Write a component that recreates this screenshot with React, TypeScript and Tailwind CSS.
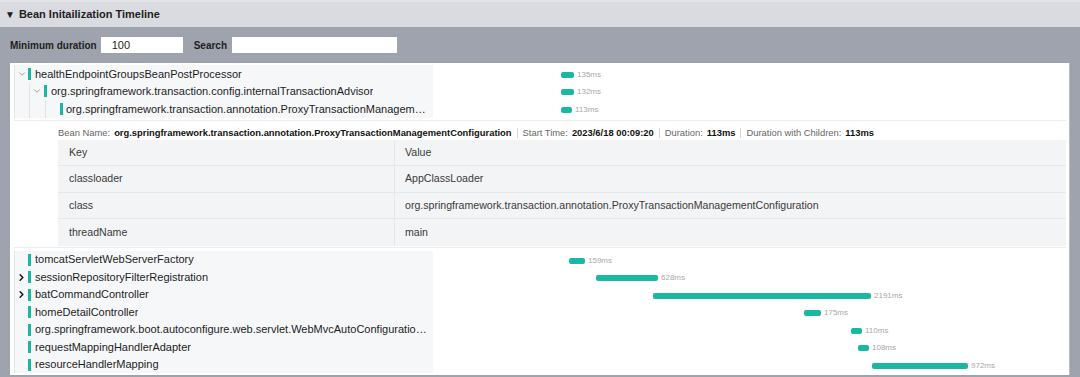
import { ChevronDown, ChevronRight } from "lucide-react";

type Row = {
  name: string;
  level: number;
  toggle?: "open" | "closed";
  start: number;
  width: number;
  ms: string;
};

const topRows: Row[] = [
  { name: "healthEndpointGroupsBeanPostProcessor", level: 0, toggle: "open", start: 561, width: 13, ms: "135ms" },
  { name: "org.springframework.transaction.config.internalTransactionAdvisor", level: 1, toggle: "open", start: 561, width: 13, ms: "132ms" },
  { name: "org.springframework.transaction.annotation.ProxyTransactionManagementConfiguration", level: 2, start: 561, width: 11, ms: "113ms" },
];

const bottomRows: Row[] = [
  { name: "tomcatServletWebServerFactory", level: 0, start: 569, width: 16, ms: "159ms" },
  { name: "sessionRepositoryFilterRegistration", level: 0, toggle: "closed", start: 596, width: 62, ms: "628ms" },
  { name: "batCommandController", level: 0, toggle: "closed", start: 653, width: 218, ms: "2191ms" },
  { name: "homeDetailController", level: 0, start: 804, width: 17, ms: "175ms" },
  { name: "org.springframework.boot.autoconfigure.web.servlet.WebMvcAutoConfiguration$EnableWebMvcConfiguration", level: 0, start: 851, width: 11, ms: "110ms" },
  { name: "requestMappingHandlerAdapter", level: 0, start: 858, width: 11, ms: "108ms" },
  { name: "resourceHandlerMapping", level: 0, start: 872, width: 96, ms: "972ms" },
];

const guideWidths = [15, 16];
const props = [
  ["classloader", "AppClassLoader"],
  ["class", "org.springframework.transaction.annotation.ProxyTransactionManagementConfiguration"],
  ["threadName", "main"],
];

function TreeRow({ row, h }: { row: Row; h: string }) {
  const guides = Array.from({ length: row.level }, (_, i) => guideWidths[i]);
  return (
    <div className={`flex ${h}`}>
      <div className="w-[419px] shrink-0 flex bg-[#f6f7f8] pr-[5px]">
        {guides.map((w, i) => (
          <span key={i} className="h-full border-l border-[#e3e5e8] shrink-0" style={{ width: w }} />
        ))}
        <span className={`h-full border-l border-[#e3e5e8] shrink-0 flex items-center justify-center ${row.level === 0 ? "w-[14px]" : "w-[15px]"}`}>
          {row.toggle === "open" && <ChevronDown size={10} strokeWidth={1.6} className="text-[#777]" />}
          {row.toggle === "closed" && <ChevronRight size={11} strokeWidth={3} className="text-[#111]" />}
        </span>
        <span className="w-[3px] h-[12px] self-center bg-[#1ab8a4] shrink-0" />
        <span className={`truncate self-center text-[11px] text-[#1d1d1f] ${row.level === 2 ? "ml-[3px]" : "ml-[4px]"}`}>
          {row.name}
        </span>
      </div>
      <div className="flex-1 flex items-center">
        <span className="h-[6px] rounded-[2px] bg-[#1ab8a4] shrink-0 mt-[2px]" style={{ marginLeft: row.start - 433, width: row.width }} />
        <span className="ml-[3px] text-[8px] text-[#a8a8a8] mt-[2px]">{row.ms}</span>
      </div>
    </div>
  );
}

export default function App() {
  return (
    <div className="w-[1080px] h-[377px] overflow-hidden bg-[#9ea3ae] font-['Liberation_Sans',Arial,sans-serif]">
      <div className="h-[27px] bg-[#d9dbe0] border-t-2 border-[#e4e5e9] flex items-center pl-[5px] text-[11px] font-semibold text-[#1e1e1e]">
        <span className="text-[10px] mr-[4px]">▼</span>
        <span>Bean Initailization Timeline</span>
      </div>

      <div className="h-[36px] flex items-center px-[10px] text-[10px] font-semibold text-[#1e1e1e]">
        <span>Minimum duration</span>
        <div className="ml-[4px] w-[82px] h-[16px] bg-white flex items-center pl-[11px] text-[11px] font-normal">100</div>
        <span className="ml-[11px]">Search</span>
        <div className="ml-[5px] w-[165px] h-[16px] bg-white" />
      </div>

      <div className="ml-[10px] w-[1060px] h-[312px] bg-white border-r border-[#b8bcc5] pt-[2px] pl-[4px]">
        {topRows.map((r) => (
          <TreeRow key={r.name} row={r} h="h-[17.67px]" />
        ))}

        <div className="mt-[2px] mr-[3px] border-t border-b border-[#ebecee] pb-[1px]">
          <div className="h-[19px] flex items-center pl-[44px] pt-[5px] text-[9.4px] text-[#666]">
            <span>Bean Name:</span>
            <span className="ml-[4px] font-bold text-[#111]">org.springframework.transaction.annotation.ProxyTransactionManagementConfiguration</span>
            <span className="mx-[5px] h-[10px] border-l border-[#d5d7da]" />
            <span>Start Time:</span>
            <span className="ml-[4px] font-bold text-[#111]">2023/6/18 00:09:20</span>
            <span className="mx-[5px] h-[10px] border-l border-[#d5d7da]" />
            <span>Duration:</span>
            <span className="ml-[4px] font-bold text-[#111]">113ms</span>
            <span className="mx-[5px] h-[10px] border-l border-[#d5d7da]" />
            <span>Duration with Children:</span>
            <span className="ml-[4px] font-bold text-[#111]">113ms</span>
          </div>
          <div className="ml-[44px] bg-[#f3f4f6] text-[10.6px] text-[#3a3a3a]">
            <div className="flex h-[26.5px] border-b border-[#e6e7ea]">
              <div className="w-[337px] border-r border-[#e6e7ea] flex items-center pl-[11px]">Key</div>
              <div className="flex-1 flex items-center pl-[10px]">Value</div>
            </div>
            {props.map(([k, v], i) => (
              <div key={k} className={`flex h-[26.5px] ${i < 2 ? "border-b border-[#e6e7ea]" : ""}`}>
                <div className="w-[337px] border-r border-[#e6e7ea] flex items-center pl-[11px]">{k}</div>
                <div className="flex-1 flex items-center pl-[10px]">{v}</div>
              </div>
            ))}
          </div>
        </div>

        <div className="mt-[3px]">
          {bottomRows.map((r) => (
            <TreeRow key={r.name} row={r} h="h-[17.5px]" />
          ))}
        </div>
      </div>
    </div>
  );
}
